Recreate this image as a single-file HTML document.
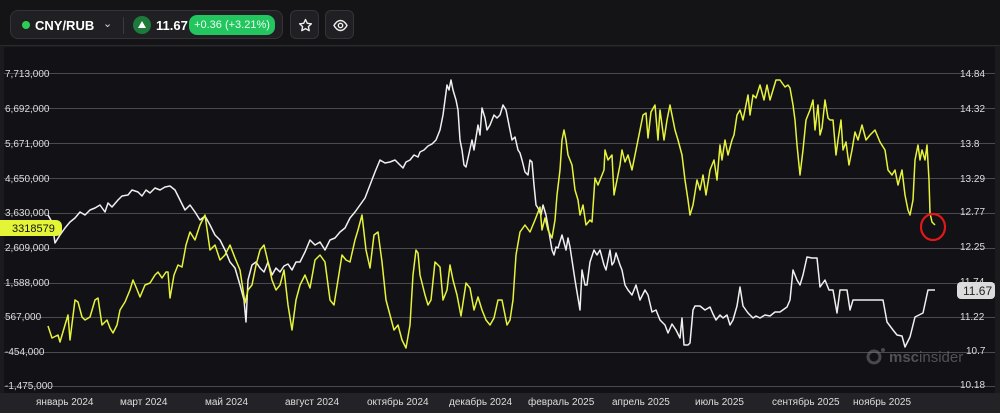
<!DOCTYPE html>
<html><head><meta charset="utf-8"><style>
*{margin:0;padding:0;box-sizing:border-box}
body{width:1000px;height:413px;background:#1b1b1f;font-family:"Liberation Sans",sans-serif;overflow:hidden;position:relative}
.top{position:absolute;left:0;top:0;width:1000px;height:46px;background:#141417;border-bottom:1px solid #2a2a2e}
.pill{position:absolute;left:10px;top:10px;width:273px;height:29px;background:#202024;border:1px solid #333338;border-radius:8px}
.btn{position:absolute;top:10px;width:29px;height:29px;background:#202024;border:1px solid #333338;border-radius:6px}
.chart{position:absolute;left:4px;top:47px;width:991px;height:346px;background:#111116}
.bottom{position:absolute;left:0;top:393px;width:1000px;height:20px;background:#232327}
</style></head><body>
<div class="top"></div>
<div class="pill">
 <div style="position:absolute;left:11px;top:10px;width:8px;height:8px;border-radius:50%;background:#2ecc55"></div>
 <div style="position:absolute;left:24px;top:7px;color:#fff;font-weight:bold;font-size:13px">CNY/RUB</div>
 <div style="position:absolute;left:92px;top:6px;color:#ddd;font-size:11px">&#8964;</div>
 <div style="position:absolute;left:112px;top:6px;width:1px;height:17px;background:#3a3a3f"></div>
 <div style="position:absolute;left:122px;top:5px;width:18px;height:18px;border-radius:50%;background:#1d7a3a"></div>
 <div style="position:absolute;left:127px;top:10px;width:0;height:0;border-left:4px solid transparent;border-right:4px solid transparent;border-bottom:7px solid #fff"></div>
 <div style="position:absolute;left:145px;top:7px;color:#fff;font-weight:bold;font-size:13px">11.67</div>
 <div style="position:absolute;left:178px;top:4px;width:86px;height:20px;border-radius:8px;background:#22c55e;color:#eafff0;font-size:11px;line-height:20px;text-align:center">+0.36 (+3.21%)</div>
</div>
<div class="btn" style="left:290px"><svg width="29" height="29" viewBox="0 0 29 29"><path d="M14.5 8.5l1.8 3.8 4.1.5-3 2.8.8 4.1-3.7-2.1-3.7 2.1.8-4.1-3-2.8 4.1-.5z" fill="none" stroke="#eee" stroke-width="1.4" stroke-linejoin="round"/></svg></div>
<div class="btn" style="left:325px"><svg width="29" height="29" viewBox="0 0 29 29"><path d="M8 14.5c2-3.5 4.2-5 6.5-5s4.5 1.5 6.5 5c-2 3.5-4.2 5-6.5 5s-4.5-1.5-6.5-5z" fill="none" stroke="#eee" stroke-width="1.4"/><circle cx="14.5" cy="14.5" r="2.2" fill="none" stroke="#eee" stroke-width="1.4"/></svg></div>
<div class="chart"></div>
<div class="bottom"></div>
<svg style="position:absolute;left:0;top:0" width="1000" height="413">
<g stroke="#4a4a50" stroke-width="1">
<line x1="4" y1="73.5" x2="995" y2="73.5"/><line x1="4" y1="108.5" x2="995" y2="108.5"/><line x1="4" y1="143.5" x2="995" y2="143.5"/><line x1="4" y1="178.5" x2="995" y2="178.5"/><line x1="4" y1="213.5" x2="995" y2="213.5"/><line x1="4" y1="248.5" x2="995" y2="248.5"/><line x1="4" y1="283.5" x2="995" y2="283.5"/><line x1="4" y1="317.5" x2="995" y2="317.5"/><line x1="4" y1="352.5" x2="995" y2="352.5"/><line x1="4" y1="386.5" x2="995" y2="386.5"/>
</g>
<g opacity="0.55">
<circle cx="874" cy="357" r="6" fill="none" stroke="#777" stroke-width="3"/>
<circle cx="883" cy="350" r="2" fill="#777"/>
<text x="889" y="362" font-size="15" fill="#888" font-family="Liberation Sans,sans-serif"><tspan font-weight="bold">msc</tspan>insider</text>
</g>
<g fill="#ddd" font-size="10" font-family="Liberation Sans,sans-serif">
<text x="5" y="77">7,713,000</text><text x="5" y="112">6,692,000</text><text x="5" y="147">5,671,000</text><text x="5" y="182">4,650,000</text><text x="5" y="216">3,630,000</text><text x="5" y="251">2,609,000</text><text x="5" y="286">1,588,000</text><text x="5" y="320">567,000</text><text x="5" y="355">-454,000</text><text x="5" y="389">-1,475,000</text>
<text x="960" y="77">14.84</text><text x="960" y="112">14.32</text><text x="960" y="147">13.8</text><text x="960" y="182">13.29</text><text x="960" y="215">12.77</text><text x="960" y="250">12.25</text><text x="960" y="285">11.74</text><text x="960" y="320">11.22</text><text x="966" y="354">10.7</text><text x="960" y="388">10.18</text>
<g font-size="10"><text x="36" y="405">январь 2024</text><text x="120" y="405">март 2024</text><text x="205" y="405">май 2024</text><text x="285" y="405">август 2024</text><text x="367" y="405">октябрь 2024</text><text x="449" y="405">декабрь 2024</text><text x="528" y="405">февраль 2025</text><text x="612" y="405">апрель 2025</text><text x="695" y="405">июль 2025</text><text x="772" y="405">сентябрь 2025</text><text x="853" y="405">ноябрь 2025</text></g>
</g>
<polyline fill="none" stroke="#f0f0f0" stroke-width="1.5" stroke-linejoin="round" points="48,215 52,222 55,243 60,235 65,228 70,222 75,218 80,212 85,215 90,210 95,208 100,205 105,212 108,203 112,207 118,200 122,196 128,195 132,190 138,192 142,196 146,190 150,193 155,188 160,190 165,187 170,186 175,190 180,200 185,210 190,205 195,212 200,220 205,216 210,225 215,235 220,240 225,250 230,262 235,268 240,285 244,300 246,322 248,280 252,265 256,262 260,268 264,272 268,262 272,275 276,268 280,272 284,266 288,264 292,270 296,262 300,262 305,252 310,240 315,245 320,242 325,250 330,240 335,238 340,232 345,228 350,218 355,212 360,205 365,198 370,185 375,172 380,160 385,163 390,162 395,160 400,165 403,168 406,162 410,160 414,155 418,157 420,152 424,150 428,146 432,144 436,140 440,130 443,115 445,100 447,85 449,90 451,80 453,90 456,100 458,110 460,140 462,150 464,165 466,167 468,158 472,140 474,150 478,125 480,135 482,108 485,118 487,130 490,125 494,115 497,118 500,115 503,105 506,110 508,120 512,140 515,137 518,150 520,153 522,160 525,172 528,175 530,160 532,162 534,185 536,205 538,208 541,215 543,205 546,215 550,238 552,250 554,255 556,247 558,248 562,235 566,250 568,238 570,247 575,280 580,310 582,270 585,285 587,285 590,262 594,250 597,255 600,250 604,265 606,270 610,250 612,265 614,262 616,253 620,265 622,270 625,285 628,290 632,295 636,285 640,300 645,290 648,295 652,312 656,310 660,320 665,325 668,333 672,324 676,330 680,338 682,318 684,345 688,345 690,343 693,310 695,306 700,306 705,310 710,307 713,314 716,320 720,315 723,318 727,315 730,325 733,320 737,306 740,287 743,306 748,313 753,318 756,316 760,318 765,315 770,316 775,312 780,312 787,307 790,300 793,270 797,280 800,285 803,275 807,257 812,258 817,258 820,287 825,280 829,290 833,290 837,313 840,290 847,290 850,310 853,300 883,300 887,322 893,330 897,335 902,336 905,347 910,337 915,317 923,313 928,290 935,290"/>
<polyline fill="none" stroke="#e6f33a" stroke-width="1.5" stroke-linejoin="round" points="48,326 52,338 58,335 60,342 65,325 68,315 70,340 75,300 78,302 82,317 85,320 90,317 95,300 98,298 102,325 107,320 110,328 113,333 117,325 120,310 125,302 130,290 133,280 136,287 140,297 145,285 150,283 155,275 158,272 162,278 166,272 168,272 170,298 174,275 178,265 182,267 186,245 190,232 195,240 200,225 205,215 210,250 215,245 220,260 225,255 230,245 235,258 240,270 245,303 248,290 252,285 256,265 260,250 264,245 268,262 272,280 276,290 280,285 284,270 288,305 292,330 296,300 300,285 305,275 310,288 315,260 320,255 325,262 330,300 334,305 338,280 342,255 346,260 350,262 355,240 358,230 362,215 366,250 370,268 374,235 378,232 382,262 386,300 390,315 394,330 398,325 402,340 406,348 410,325 413,275 416,250 418,253 420,275 425,295 428,305 431,300 435,262 440,267 443,300 447,290 450,265 453,280 457,295 461,316 466,283 470,288 474,310 478,297 482,310 486,320 490,325 494,318 498,300 502,300 507,325 510,320 513,300 516,255 520,232 525,225 530,232 535,220 540,207 542,230 545,218 548,230 552,238 555,220 557,195 560,170 562,140 564,130 566,140 568,155 572,165 575,190 578,200 580,215 583,205 586,225 590,220 592,222 595,178 598,185 600,180 604,170 605,150 608,160 612,155 614,195 617,180 620,165 622,150 625,162 628,155 632,170 635,155 638,140 643,115 646,113 648,138 651,112 655,105 658,140 660,110 664,140 667,120 670,105 675,130 678,140 682,155 685,180 688,200 690,215 693,205 697,180 700,190 703,175 706,195 710,170 714,160 717,180 720,145 722,160 725,140 728,155 732,140 734,135 737,115 740,110 743,120 746,105 748,95 750,115 753,95 756,98 760,85 764,100 767,85 770,100 773,90 776,80 780,80 785,87 788,85 790,88 793,105 795,120 797,145 800,175 803,150 806,120 810,110 813,100 815,130 818,105 820,135 822,128 825,100 828,118 830,120 833,120 836,155 838,140 841,120 843,150 846,142 849,165 852,150 855,132 858,140 862,125 866,140 870,135 875,130 880,142 885,150 888,170 892,175 895,170 898,185 902,170 905,195 908,210 910,215 913,200 915,160 918,145 920,160 922,150 925,160 927,145 929,180 930,213 932,222 935,225"/>
<ellipse cx="933" cy="227" rx="12" ry="13" fill="none" stroke="#e01818" stroke-width="2.2"/>
<path d="M0 220h56a6 6 0 0 1 6 6v4a6 6 0 0 1-6 6H0z" fill="#e3f536"/>
<text x="12" y="232" font-size="11" fill="#111" font-family="Liberation Sans,sans-serif">3318579</text>
<rect x="957" y="282" width="38" height="17" rx="4" fill="#dcdcdc"/>
<text x="963" y="295" font-size="12" fill="#222" font-family="Liberation Sans,sans-serif">11.67</text>
</svg>
</body></html>
